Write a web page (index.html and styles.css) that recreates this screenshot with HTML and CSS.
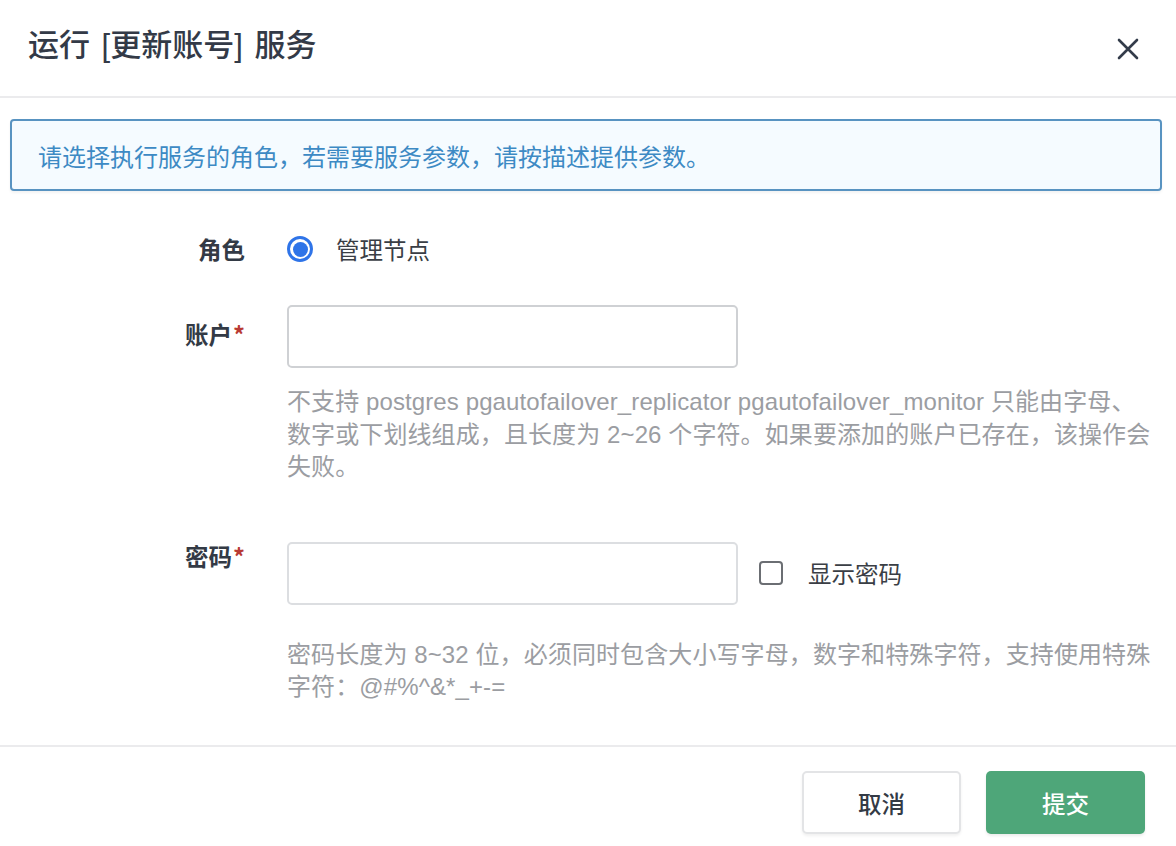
FILE: index.html
```html
<!DOCTYPE html>
<html lang="zh-CN">
<head>
    <meta charset="UTF-8">
    <meta name="viewport" content="width=device-width, initial-scale=1.0">
    <title>运行服务</title>
    <link rel="stylesheet" href="styles.css">
</head>
<body>
    <div class="dialog">
        <!-- 标题栏 -->
        <div class="dialog-header">
            <h2 class="dialog-title">运行 [更新账号] 服务</h2>
            <span class="close-btn">
                <svg width="24" height="24" viewBox="0 0 24 24">
                    <path d="M3 3 L21 21 M21 3 L3 21" stroke="#333c4a" stroke-width="2.6" stroke-linecap="round" fill="none"/>
                </svg>
            </span>
        </div>

        <div class="dialog-body">
            <div class="alert">请选择执行服务的角色，若需要服务参数，请按描述提供参数。</div>

            <div class="form">
                <div class="form-row row-role">
                    <div class="form-label">角色</div>
                    <div class="form-control">
                        <label class="radio">
                            <span class="radio-dot"></span>
                            <span>管理节点</span>
                        </label>
                    </div>
                </div>

                <div class="form-row row-account">
                    <div class="form-label label-account">账户<span class="required">*</span></div>
                    <div class="form-control">
                        <input type="text" class="text-input">
                        <div class="help help-account">不支持 postgres pgautofailover_replicator pgautofailover_monitor 只能由字母、<br>数字或下划线组成，且长度为 2~26 个字符。如果要添加的账户已存在，该操作会<br>失败。</div>
                    </div>
                </div>

                <div class="form-row row-password">
                    <div class="form-label label-password">密码<span class="required">*</span></div>
                    <div class="form-control">
                        <div class="input-line">
                            <input type="password" class="text-input">
                            <label class="checkbox">
                                <span class="checkbox-box"></span>
                                <span>显示密码</span>
                            </label>
                        </div>
                        <div class="help help-password">密码长度为 8~32 位，必须同时包含大小写字母，数字和特殊字符，支持使用特殊<br>字符：@#%^&amp;*_+-=</div>
                    </div>
                </div>
            </div>
        </div>

        <div class="dialog-footer">
            <button class="btn btn-cancel">取消</button>
            <button class="btn btn-submit">提交</button>
        </div>
    </div>
</body>
</html>
```

FILE: styles.css
```css
body {
    margin: 0;
    padding: 0;
    background: #fff;
    font-family: "Noto Sans CJK SC", sans-serif;
    color: #333a45;
}
.dialog {
    width: 1176px;
    height: 846px;
    display: flex;
    flex-direction: column;
}
.dialog-header {
    height: 96px;
    border-bottom: 2px solid #ebebed;
    display: flex;
    align-items: center;
    justify-content: space-between;
    padding: 0 36px 0 28px;
    box-sizing: content-box;
}
.dialog-title {
    margin: 0 0 12px 0;
    font-family: "Liberation Sans", "Noto Sans CJK SC", sans-serif;
    font-size: 31px;
    font-weight: 500;
    word-spacing: 3px;
    color: #333a47;
}
.close-btn {
    display: flex;
    margin-top: 2px;
}
.dialog-body {
    flex: 1;
    padding: 21px 14px 0 10px;
}
.alert {
    height: 72px;
    box-sizing: border-box;
    border: 2px solid #5893c1;
    border-radius: 4px;
    background: #f5fbff;
    color: #3d8ac4;
    font-size: 24px;
    padding-left: 26px;
    display: flex;
    align-items: center;
    box-shadow: 0 2px 3px rgba(0, 0, 0, 0.05);
}
.form {
    display: flex;
    flex-direction: column;
}
.form-row {
    display: flex;
}
.form-label {
    width: 235px;
    text-align: right;
    font-size: 23.5px;
    font-weight: 700;
    color: #333a45;
    flex-shrink: 0;
    margin-right: 42px;
}
.required {
    color: #b93a34;
    margin-left: 1px;
}
.form-control {
    flex: 1;
}
.row-role {
    margin-top: 37px;
    align-items: center;
    height: 42px;
}
.radio {
    display: flex;
    align-items: center;
    font-size: 23.5px;
    color: #3a3e45;
}
.radio-dot {
    width: 26px;
    height: 26px;
    box-sizing: border-box;
    border: 3px solid #2f74e8;
    border-radius: 50%;
    margin-right: 23px;
    display: flex;
    align-items: center;
    justify-content: center;
}
.radio-dot:before {
    content: "";
    width: 15px;
    height: 15px;
    border-radius: 50%;
    background: #2f74e8;
}
.row-account {
    margin-top: 35px;
}
.label-account {
    padding-top: 12px;
}
.text-input {
    display: block;
    width: 451px;
    height: 63px;
    box-sizing: border-box;
    border: 2px solid #cfd1d4;
    border-radius: 5px;
    outline: none;
    background: #fff;
    font-size: 22px;
}
.row-password .text-input {
    border-color: #dcdee1;
}
.help {
    font-family: "Liberation Sans", "Noto Sans CJK SC", sans-serif;
    font-size: 24px;
    letter-spacing: 0.1px;
    line-height: 32.5px;
    color: #9b9da2;
    white-space: nowrap;
}
.help-account {
    margin-top: 18px;
}
.row-password {
    margin-top: 58px;
}
.label-password {
    line-height: 28px;
}
.input-line {
    display: flex;
    align-items: center;
}
.checkbox {
    display: flex;
    align-items: center;
    margin-left: 21px;
    font-size: 23.5px;
    color: #3a3e45;
}
.checkbox-box {
    width: 24px;
    height: 24px;
    box-sizing: border-box;
    border: 2px solid #6b6e73;
    border-radius: 4px;
    margin-right: 25px;
}
.help-password {
    margin-top: 34px;
}
.dialog-footer {
    border-top: 2px solid #ebebed;
    height: 99px;
    display: flex;
    justify-content: flex-end;
    align-items: center;
    gap: 25px;
    padding-right: 31px;
}
.btn {
    width: 159px;
    height: 63px;
    border-radius: 5px;
    font-family: "Noto Sans CJK SC", sans-serif;
    font-size: 23.5px;
    font-weight: 500;
    cursor: pointer;
    margin-top: 12px;
}
.btn-cancel {
    background: #fff;
    border: 2px solid #e3e4e6;
    color: #333a45;
    box-shadow: 0 2px 3px rgba(0, 0, 0, 0.06);
}
.btn-submit {
    background: #4ea679;
    border: none;
    color: #fff;
    box-shadow: 0 2px 3px rgba(0, 0, 0, 0.08);
}
```
